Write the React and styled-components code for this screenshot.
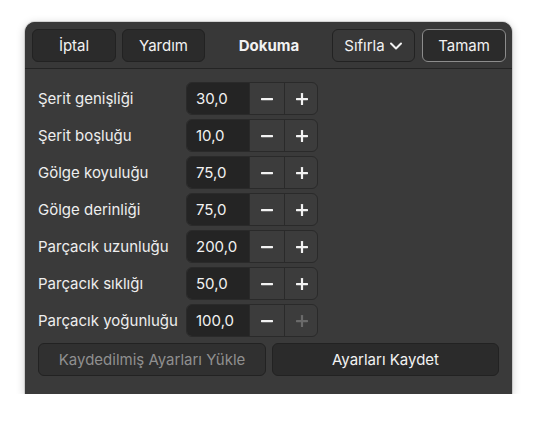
import React from "react"
import styled, { createGlobalStyle } from "styled-components"

const Global = createGlobalStyle`
  html, body { margin: 0; background: #ffffff; }
  body { font-family: Inter, "Noto Sans", sans-serif; -webkit-font-smoothing: antialiased; }
`

const Page = styled.div`
  padding: 22px 0 0 25px;
`

const Window = styled.div`
  width: 487px;
  height: 372px;
  display: flex;
  flex-direction: column;
  background: #3a3a3a;
  border-radius: 10px 10px 0 0;
  box-shadow: 0 2px 10px rgba(0, 0, 0, 0.22), 0 0 0 1px rgba(0, 0, 0, 0.12);
  overflow: hidden;
  color: #f2f2f2;
`

const Header = styled.div`
  height: 47px;
  box-sizing: border-box;
  padding: 7px 6px 0 7px;
  background: #383838;
  border-bottom: 1px solid #242424;
  display: grid;
  grid-template-columns: 1fr auto 1fr;
  align-items: start;
`

const Group = styled.div`
  display: flex;
  gap: ${p => p.gap}px;
  justify-content: ${p => (p.end ? "flex-end" : "flex-start")};
`

const Button = styled.button`
  height: 33px;
  width: ${p => (p.w ? `${p.w}px` : "100%")};
  box-sizing: border-box;
  border-radius: 6px;
  border: 1px solid ${p => (p.focus ? "#8c8c8c" : "#222222")};
  background: ${p => (p.flat ? "#383838" : p.disabled ? "#303030" : "#2b2b2b")};
  color: ${p => (p.disabled ? "#8f8f8f" : "#f2f2f2")};
  font-family: inherit;
  font-size: 15px;
  display: flex;
  align-items: center;
  justify-content: center;
  gap: 4px;
  padding: 0;
`

const Title = styled.div`
  font-weight: 700;
  font-size: 15px;
  height: 33px;
  line-height: 33px;
`

const Body = styled.div`
  padding: 13px 13px 17px 13px;
  display: flex;
  flex-direction: column;
`

const Rows = styled.div`
  display: flex;
  flex-direction: column;
  gap: 4px;
`

const Row = styled.div`
  display: grid;
  grid-template-columns: 148px 132px;
  align-items: center;
  height: 33px;
`

const Label = styled.div`
  font-size: 15px;
  color: #eeeeee;
`

const Spin = styled.div`
  display: grid;
  grid-template-columns: 62px 35px 35px;
  height: 33px;
  box-sizing: border-box;
  border: 1px solid #2a2a2a;
  border-radius: 6px;
  overflow: hidden;
  background: #3c3c3c;
`

const Entry = styled.div`
  background: #242424;
  font-size: 15px;
  color: #f2f2f2;
  padding-left: 9px;
  display: flex;
  align-items: center;
`

const SpinBtn = styled.div`
  display: flex;
  align-items: center;
  justify-content: center;
  border-left: 1px solid #2a2a2a;
  color: ${p => (p.disabled ? "#6a6a6a" : "#f2f2f2")};
`

const Footer = styled.div`
  display: grid;
  grid-template-columns: 228px 227px;
  gap: 6px;
  margin-top: 6px;
`

const Minus = () => (
  <svg width="14" height="14" viewBox="0 0 14 14">
    <rect x="1" y="6" width="12" height="2.2" rx="0.6" fill="currentColor" />
  </svg>
)

const Plus = () => (
  <svg width="14" height="14" viewBox="0 0 14 14">
    <rect x="1" y="6" width="12" height="2.2" rx="0.6" fill="currentColor" />
    <rect x="5.9" y="1" width="2.2" height="12" rx="0.6" fill="currentColor" />
  </svg>
)

const Chevron = () => (
  <svg width="14" height="14" viewBox="0 0 14 14">
    <path d="M2 4.5 L7 9.5 L12 4.5" fill="none" stroke="currentColor" strokeWidth="2" strokeLinecap="round" strokeLinejoin="round" />
  </svg>
)

const params = [
  { label: "Şerit genişliği", value: "30,0" },
  { label: "Şerit boşluğu", value: "10,0" },
  { label: "Gölge koyuluğu", value: "75,0" },
  { label: "Gölge derinliği", value: "75,0" },
  { label: "Parçacık uzunluğu", value: "200,0" },
  { label: "Parçacık sıklığı", value: "50,0" },
  { label: "Parçacık yoğunluğu", value: "100,0", max: true },
]

export default function App() {
  return (
    <>
      <Global />
      <Page>
        <Window>
          <Header>
            <Group gap={6}>
              <Button w={84}>İptal</Button>
              <Button w={83}>Yardım</Button>
            </Group>
            <Title>Dokuma</Title>
            <Group gap={7} end>
              <Button w={83} flat>Sıfırla <Chevron /></Button>
              <Button w={84} focus>Tamam</Button>
            </Group>
          </Header>
          <Body>
            <Rows>
              {params.map(p => (
                <Row key={p.label}>
                  <Label>{p.label}</Label>
                  <Spin>
                    <Entry>{p.value}</Entry>
                    <SpinBtn><Minus /></SpinBtn>
                    <SpinBtn disabled={p.max}><Plus /></SpinBtn>
                  </Spin>
                </Row>
              ))}
            </Rows>
            <Footer>
              <Button disabled>Kaydedilmiş Ayarları Yükle</Button>
              <Button>Ayarları Kaydet</Button>
            </Footer>
          </Body>
        </Window>
      </Page>
    </>
  )
}
